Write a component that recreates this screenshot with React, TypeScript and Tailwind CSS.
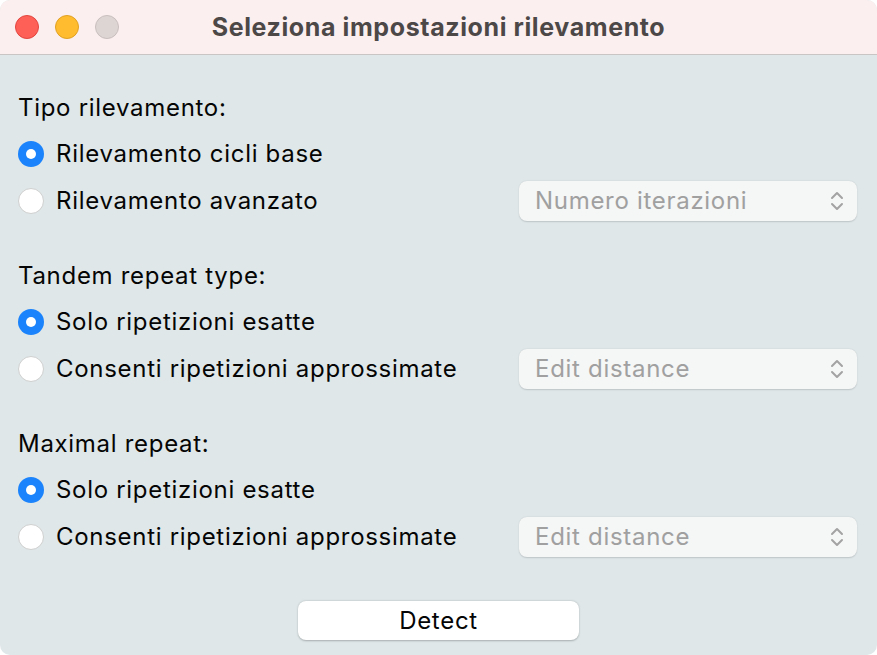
import React from "react";

function Radio({ checked }: { checked: boolean }) {
  return checked ? (
    <div className="w-[26px] h-[26px] rounded-full bg-[#1b83fb] flex items-center justify-center shrink-0">
      <div className="w-[10px] h-[10px] rounded-full bg-white" />
    </div>
  ) : (
    <div className="w-[26px] h-[26px] rounded-full bg-white border border-[#cfcfcf] shrink-0" />
  );
}

function Select({ label }: { label: string }) {
  return (
    <div className="w-[338px] h-[40px] rounded-[8px] bg-[#f5f6f6] shadow-[0_0.5px_1.5px_rgba(0,0,0,0.15)] flex items-center justify-between pl-[16px] pr-[13px]">
      <span className="text-[#a0a0a0]">{label}</span>
      <svg width="14" height="24" viewBox="0 0 14 24" fill="none" stroke="#a3a3a3" strokeWidth="2" strokeLinecap="round" strokeLinejoin="round">
        <path d="M2 9 L7 4 L12 9" />
        <path d="M2 15 L7 20 L12 15" />
      </svg>
    </div>
  );
}

function Row({ checked, label, select }: { checked: boolean; label: string; select?: string }) {
  return (
    <div className="h-[47px] flex items-center justify-between">
      <div className="flex items-center gap-[12px]">
        <Radio checked={checked} />
        <span className="text-[#050505]">{label}</span>
      </div>
      {select && <Select label={select} />}
    </div>
  );
}

function Label({ text }: { text: string }) {
  return <div className="h-[47px] flex items-center text-[#050505] pt-[3px]">{text}</div>;
}

export default function App() {
  return (
    <div className="w-[877px] h-[655px] bg-white">
      <div
        className="w-[877px] h-[655px] rounded-[10px] overflow-hidden bg-[#dfe7e8] flex flex-col text-[24px] tracking-[0.7px]"
        style={{ fontFamily: "Inter, 'Noto Sans', sans-serif" }}
      >
        <div className="h-[55px] bg-[#fbefef] border-b border-[#c9c5c5] relative flex items-center justify-center shrink-0">
          <div className="absolute left-[15px] top-[15px] flex gap-[16px]">
            <div className="w-[24px] h-[24px] rounded-full bg-[#fe5f57] border border-[#e2463f]" />
            <div className="w-[24px] h-[24px] rounded-full bg-[#febc2e] border border-[#e1a123]" />
            <div className="w-[24px] h-[24px] rounded-full bg-[#ddd4d4] border border-[#c9bfbf]" />
          </div>
          <span className="font-bold text-[#4d4848] text-[25px] tracking-[0.6px] mt-[1px]">Seleziona impostazioni rilevamento</span>
        </div>
        <div className="flex flex-col pl-[18px] pr-[20px] pt-[28px]">
          <Label text="Tipo rilevamento:" />
          <Row checked label="Rilevamento cicli base" />
          <Row checked={false} label="Rilevamento avanzato" select="Numero iterazioni" />
          <div className="h-[27px]" />
          <Label text="Tandem repeat type:" />
          <Row checked label="Solo ripetizioni esatte" />
          <Row checked={false} label="Consenti ripetizioni approssimate" select="Edit distance" />
          <div className="h-[27px]" />
          <Label text="Maximal repeat:" />
          <Row checked label="Solo ripetizioni esatte" />
          <Row checked={false} label="Consenti ripetizioni approssimate" select="Edit distance" />
        </div>
        <div className="flex justify-center pt-[41px]">
          <div className="w-[281px] h-[39px] rounded-[8px] bg-white shadow-[0_0.5px_2px_rgba(0,0,0,0.25)] flex items-center justify-center text-[#050505]">
            Detect
          </div>
        </div>
      </div>
    </div>
  );
}
